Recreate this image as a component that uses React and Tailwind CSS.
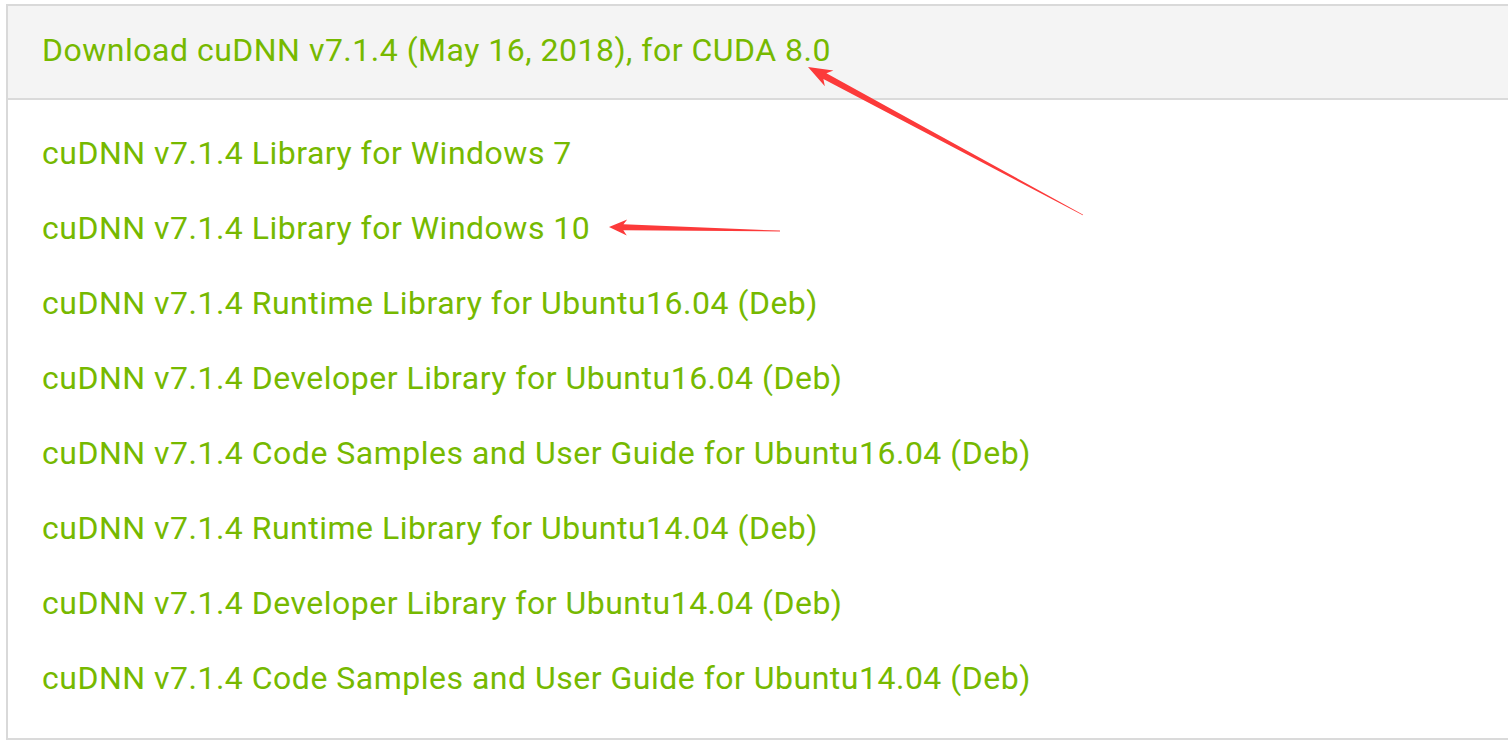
import React from 'react';

const items = [
  'cuDNN v7.1.4 Library for Windows 7',
  'cuDNN v7.1.4 Library for Windows 10',
  'cuDNN v7.1.4 Runtime Library for Ubuntu16.04 (Deb)',
  'cuDNN v7.1.4 Developer Library for Ubuntu16.04 (Deb)',
  'cuDNN v7.1.4 Code Samples and User Guide for Ubuntu16.04 (Deb)',
  'cuDNN v7.1.4 Runtime Library for Ubuntu14.04 (Deb)',
  'cuDNN v7.1.4 Developer Library for Ubuntu14.04 (Deb)',
  'cuDNN v7.1.4 Code Samples and User Guide for Ubuntu14.04 (Deb)',
];

// tapered red annotation arrow, tip -> tail
function arrowPoints(tip, tail, hl, hw, sw) {
  const dx = tail[0] - tip[0];
  const dy = tail[1] - tip[1];
  const len = Math.hypot(dx, dy);
  const u = [dx / len, dy / len];
  const n = [-u[1], u[0]];
  const at = (d, w) => [tip[0] + u[0] * d + n[0] * w, tip[1] + u[1] * d + n[1] * w];
  const pts = [
    tip,
    at(hl, hw),
    at(hl * 0.8, sw),
    [tail[0] + n[0] * 0.4, tail[1] + n[1] * 0.4],
    [tail[0] - n[0] * 0.4, tail[1] - n[1] * 0.4],
    at(hl * 0.8, -sw),
    at(hl, -hw),
  ];
  return pts.map((p) => p.join(',')).join(' ');
}

export default function App() {
  return (
    <div className="relative h-[752px] w-[1508px] overflow-hidden bg-white pt-[4px] pl-[6px] font-['Roboto',sans-serif]">
      <div className="border-t-2 border-l-2 border-[#d9d9d9]">
        <div className="flex h-[94px] items-center border-b-2 border-[#dadada] bg-[#f4f4f4] pl-[34px] pb-[4px]">
          <span className="text-[32px] tracking-[0.5px] text-[#76b900]">Download cuDNN v7.1.4 (May 16, 2018), for CUDA 8.0</span>
        </div>
        <div className="flex flex-col pt-[16px] pb-[22px] pl-[34px] border-b-2 border-[#dadada]">
          {items.map((t) => (
            <div key={t} className="h-[75px] leading-[75px] text-[32px] tracking-[0.5px] text-[#76b900]">
              {t}
            </div>
          ))}
        </div>
      </div>

      <svg className="absolute inset-0 pointer-events-none" width="1508" height="752">
        <polygon points={arrowPoints([808, 67], [1083, 215], 24, 9, 3.2)} fill="#fc3a3a" />
        <polygon points={arrowPoints([609, 227], [780, 231], 18, 8, 3)} fill="#fc3a3a" />
      </svg>
    </div>
  );
}
